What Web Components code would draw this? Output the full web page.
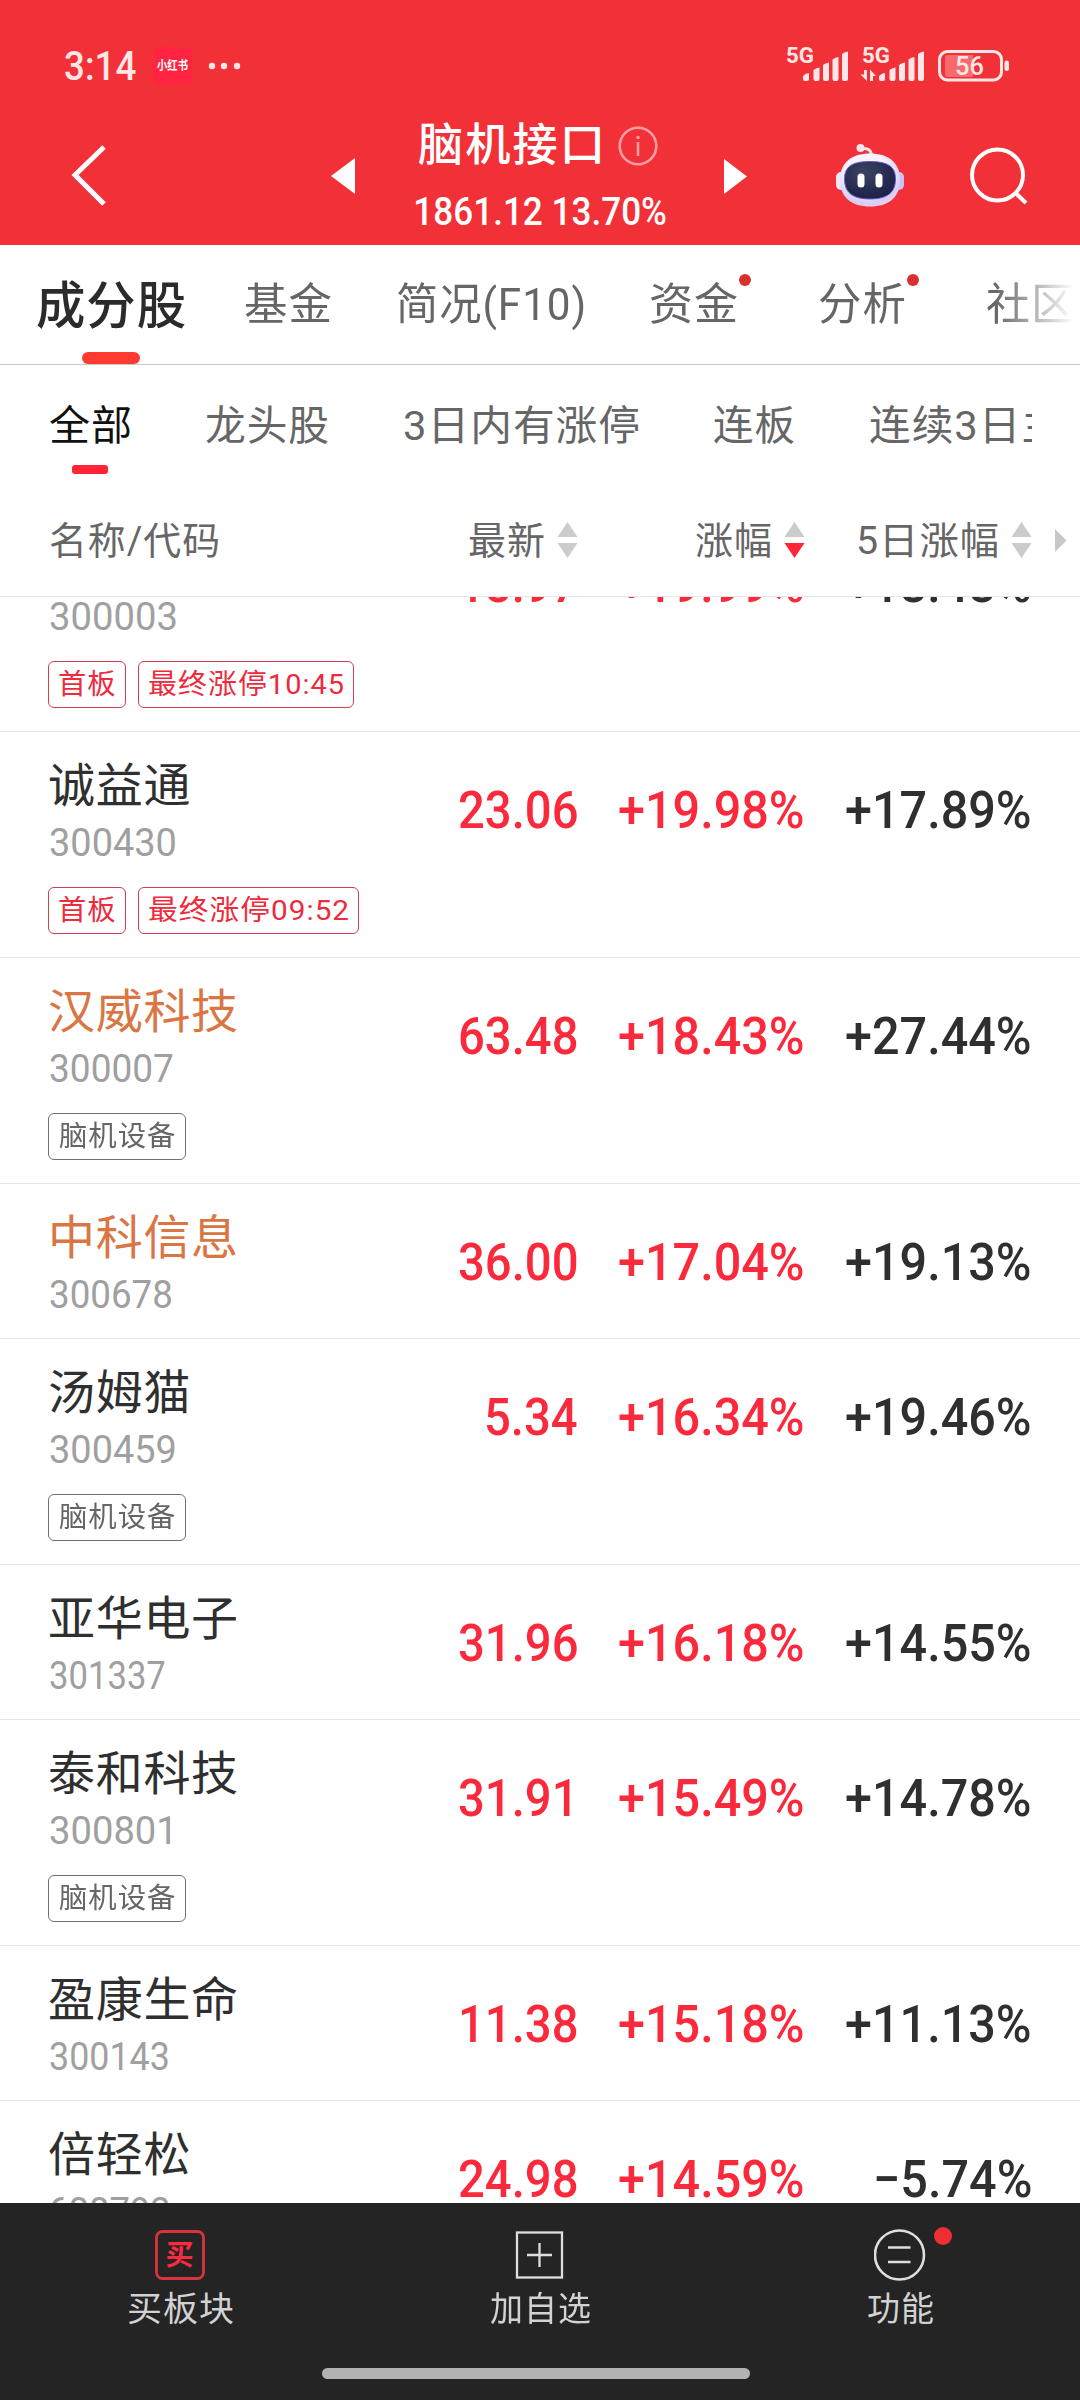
<!DOCTYPE html>
<html lang="zh-CN">
<head>
  <meta charset="utf-8">
  <title>脑机接口</title>
  <style>
    body {
      margin: 0;
      background: #fff;
      font-family: Roboto, "Noto Sans CJK SC", sans-serif;
    }
  </style>
</head>
<body>
  <app-board></app-board>

  <template id="app-board">
    <style>
      :host {
        display: flex;
        flex-direction: column;
        width: 1080px;
        height: 2400px;
        overflow: hidden;
      }
      header {
        flex: none;
        height: 245px;
        background: #f23037;
      }
      main {
        flex: 1;
        min-height: 0;
        overflow: hidden;
      }
      .list {
        margin-top: -91px;
      }
    </style>
    <header>
      <status-bar></status-bar>
      <board-nav></board-nav>
    </header>
    <tab-bar>
      <tab-item active w="148" style="margin-left: 37px">成分股</tab-item>
      <tab-item w="86" style="margin-left: 60px">基金</tab-item>
      <tab-item w="186" style="margin-left: 67px">简况(F10)</tab-item>
      <tab-item dot w="86" style="margin-left: 67px">资金</tab-item>
      <tab-item dot w="86" style="margin-left: 82px">分析</tab-item>
      <tab-item w="86" style="margin-left: 82px">社区</tab-item>
    </tab-bar>
    <filter-bar>
      <filter-item active w="80" style="margin-left: 50px">全部</filter-item>
      <filter-item w="122" style="margin-left: 76px">龙头股</filter-item>
      <filter-item w="234" style="margin-left: 76px">3日内有涨停</filter-item>
      <filter-item w="80" style="margin-left: 76px">连板</filter-item>
      <filter-item w="191" style="margin-left: 76px">连续3日主</filter-item>
    </filter-bar>
    <list-head></list-head>
    <main><div class="list"></div></main>
    <bottom-bar></bottom-bar>
  </template>

  <template id="fit-text">
    <style>
      :host {
        display: block;
        flex: none;
        height: 1em;
        line-height: 1em;
        white-space: nowrap;
      }
      span {
        display: inline-block;
        transform-origin: 0 50%;
      }
    </style>
    <span><slot></slot></span>
  </template>

  <template id="status-bar">
    <style>
      :host {
        display: flex;
        align-items: center;
        box-sizing: border-box;
        height: 110px;
        padding: 22px 71px 0 65px;
        color: #ffe6e6;
      }
      svg { overflow: visible; }
      fit-text { font-size: 41px; font-weight: 500; }
      .app { margin-left: 17px; }
      .dots { margin-left: 16px; }
      .right { margin-left: auto; }
    </style>
    <fit-text w="71">3:14</fit-text>
    <svg class="app" width="39" height="38" viewBox="0 0 39 38">
      <rect width="39" height="38" rx="8" fill="#ff2442"/>
      <text x="4" y="23" font-size="12" font-weight="700" fill="#fff" textLength="31" lengthAdjust="spacingAndGlyphs">小红书</text>
    </svg>
    <svg class="dots" width="34" height="8" viewBox="0 0 34 8" fill="#ffe6e6">
      <circle cx="4" cy="4" r="3.200"/><circle cx="16" cy="4" r="3.200"/><circle cx="29" cy="4" r="3.200"/>
    </svg>
    <svg class="right" width="222" height="40" viewBox="787 45 222 40" fill="#ffe6e6">
      <g font-size="21.500" font-weight="700">
        <text x="786" y="62" textLength="28" lengthAdjust="spacingAndGlyphs">5G</text>
        <text x="862" y="62" textLength="28" lengthAdjust="spacingAndGlyphs">5G</text>
      </g>
      <g id="bars">
        <path d="M803 78v-3q3-3 6-3v6q0 2-2 2h-2q-2 0-2-2z"/>
        <path d="M813.500 78v-9q3-2.500 6-2.500v11.500q0 2-2 2h-2q-2 0-2-2z"/>
        <path d="M823 78v-14q3-2.500 6-2.500v16.500q0 2-2 2h-2q-2 0-2-2z"/>
        <path d="M832.500 78v-19.500q3-2.500 6-2.500v22q0 2-2 2h-2q-2 0-2-2z"/>
        <path d="M842 78v-25q3-2.500 6-2.500v27.500q0 2-2 2h-2q-2 0-2-2z"/>
      </g>
      <use href="#bars" x="76"/>
      <path d="M867 69v11l-6.500-6.500h3.500v-4.500zM870 80v-11.500l6 6.500h-3v5z"/>
      <rect x="939.500" y="50.500" width="62" height="28.500" rx="8" fill="none" stroke="#ffe6e6" stroke-width="3"/>
      <path d="M945 57q0-3 3-3h25v22h-25q-3 0-3-3z" fill="#f8696e"/>
      <rect x="1004.500" y="59.500" width="4.500" height="10.500" rx="2.200"/>
      <text x="955" y="74" font-size="26" font-weight="500" textLength="29" lengthAdjust="spacingAndGlyphs">56</text>
    </svg>
  </template>

  <template id="board-nav">
    <style>
      :host {
        display: flex;
        align-items: center;
        height: 135px;
        color: #fff;
      }
      svg { flex: none; display: block; margin-top: -3px; }
      .title {
        display: flex;
        flex-direction: column;
        gap: 24px;
        width: 251px;
        margin-left: 60px;
      }
      .name {
        display: flex;
        align-items: center;
        gap: 18px;
        padding-left: 4px;
      }
      .name svg { margin-top: 0; }
      .name fit-text { font-size: 45px; letter-spacing: 2px; font-weight: 500; }
      .quote { margin-left: 1px; font-size: 39.500px; font-weight: 500; }
    </style>
    <svg style="margin-left: 71px" width="36" height="64" viewBox="0 0 36 64" fill="none" stroke="#fff" stroke-width="5">
      <path d="M33 3L4 31L33 60"/>
    </svg>
    <svg style="margin-left: 224px" width="24" height="36" viewBox="0 0 24 36" fill="#fff"><path d="M0 18L24 0v36z"/></svg>
    <div class="title">
      <div class="name">
        <fit-text w="181">脑机接口</fit-text>
        <svg width="40" height="40" viewBox="0 0 40 40" fill="none" stroke="#ff9fa3" stroke-width="2.600">
          <circle cx="20" cy="20" r="18.300"/>
          <path d="M20 16v14"/><circle cx="20" cy="11.500" r="1" fill="#ff9fa3" stroke-width="1.500"/>
        </svg>
      </div>
      <fit-text class="quote" w="250">1861.12 13.70%</fit-text>
    </div>
    <svg style="margin-left: 58px" width="23" height="35" viewBox="0 0 23 35" fill="#fff"><path d="M23 17.500L0 0v35z"/></svg>
    <svg style="margin-left: 88px" width="70" height="66" viewBox="835 142 70 66">
      <defs>
        <radialGradient id="shell" cx=".45" cy=".35" r=".7">
          <stop offset=".5" stop-color="#f7f3ff"/><stop offset=".85" stop-color="#d5cdf6"/><stop offset="1" stop-color="#f3d5e6"/>
        </radialGradient>
        <radialGradient id="face" cx=".4" cy=".3" r=".8">
          <stop offset="0" stop-color="#3c4463"/><stop offset="1" stop-color="#171c44"/>
        </radialGradient>
      </defs>
      <path d="M862 147.500q9-1 9.500 7" fill="none" stroke="#fbe4ee" stroke-width="3"/>
      <circle cx="860.500" cy="147" r="4" fill="#fbe4ee"/>
      <rect x="836" y="171" width="10" height="18" rx="5" fill="#f1e6fb"/>
      <rect x="894" y="171" width="10" height="18" rx="5" fill="#c9c3f5"/>
      <path d="M840 179C840 161 852 152.500 870 152.500S900 161 900 179S888 205.500 870 205.500S840 197 840 179z" fill="url(#shell)"/>
      <path d="M844.500 178C844.500 165 853 160.500 870 160.500S895.500 165 895.500 178S888 198 870 198S844.500 191 844.500 178z" fill="url(#face)" stroke="#6a5cc8" stroke-width="1"/>
      <rect x="857.500" y="172.500" width="7" height="14" rx="3.500" fill="#fff"/>
      <rect x="875.500" y="172.500" width="7" height="14" rx="3.500" fill="#fff"/>
    </svg>
    <svg style="margin-left: 65px" width="58" height="60" viewBox="970 148 58 60" fill="none" stroke="#fff" stroke-width="4">
      <circle cx="997.500" cy="177" r="25.500"/>
      <path d="M1015 194.500L1026 205"/>
    </svg>
  </template>

  <template id="tab-bar">
    <style>
      :host {
        display: block;
        flex: none;
        height: 119px;
        border-bottom: 1px solid #c8c8c8;
      }
      div {
        display: flex;
        align-items: center;
        height: 100%;
        -webkit-mask-image: linear-gradient(to right, #000 995px, transparent 1074px);
        mask-image: linear-gradient(to right, #000 995px, transparent 1074px);
      }
    </style>
    <div><slot></slot></div>
  </template>

  <template id="tab-item">
    <style>
      :host {
        display: flex;
        flex: none;
        align-items: center;
        position: relative;
        box-sizing: border-box;
        height: 100%;
        padding-top: 1px;
        color: #666;
        font-size: 44px;
        letter-spacing: 1px;
      }
      :host([active]) {
        padding-top: 3px;
        color: #2b2b2b;
        font-size: 51px;
        font-weight: 500;
      }
      :host([active])::after {
        content: "";
        position: absolute;
        left: 45px;
        bottom: 0;
        width: 58px;
        height: 12px;
        border-radius: 6px;
        background: #ff3a30;
      }
      :host([dot])::after {
        content: "";
        position: absolute;
        right: -14px;
        top: 29px;
        width: 12px;
        height: 12px;
        border-radius: 50%;
        background: #d93030;
      }
    </style>
  </template>

  <template id="filter-bar">
    <style>
      :host {
        display: flex;
        flex: none;
        align-items: center;
        width: 1032px;
        height: 119px;
        overflow: hidden;
      }
    </style>
    <slot></slot>
  </template>

  <template id="filter-item">
    <style>
      :host {
        display: flex;
        flex: none;
        align-items: center;
        position: relative;
        box-sizing: border-box;
        height: 100%;
        padding-top: 3px;
        color: #666;
        font-size: 41px;
        letter-spacing: 1px;
      }
      :host([active]) { color: #111; }
      :host([active])::after {
        content: "";
        position: absolute;
        left: 22px;
        top: 100px;
        width: 36px;
        height: 9px;
        border-radius: 3px;
        background: #ff2436;
      }
    </style>
  </template>

  <template id="list-head">
    <style>
      :host {
        display: flex;
        flex: none;
        align-items: center;
        box-sizing: border-box;
        height: 113px;
        border-bottom: 1px solid #e6e6e6;
        color: #666;
        font-size: 38px;
        letter-spacing: 1px;
      }
      fit-text { padding-top: 2px; }
      sort-mark { margin-left: 13px; }
    </style>
    <fit-text w="168" style="margin-left: 50px">名称/代码</fit-text>
    <fit-text w="75" style="margin-left: 251px">最新</fit-text><sort-mark></sort-mark>
    <fit-text w="75" style="margin-left: 118px">涨幅</fit-text><sort-mark order="desc"></sort-mark>
    <fit-text w="140" style="margin-left: 53px">5日涨幅</fit-text><sort-mark></sort-mark>
    <svg style="margin-left: 23px" width="12" height="23" viewBox="0 0 12 23" fill="#c8c8c8"><path d="M0 0l11.500 11.500L0 23z"/></svg>
  </template>

  <template id="sort-mark">
    <style>
      :host { display: block; flex: none; width: 21px; height: 36px; }
      svg { display: block; }
      path { fill: #ccc; }
      :host([order="desc"]) .down { fill: #ff2436; }
    </style>
    <svg width="21" height="36" viewBox="0 0 21 36">
      <path d="M10.500 0L20.500 15H.5z"/>
      <path class="down" d="M10.500 36L.5 21h20z"/>
    </svg>
  </template>

  <template id="stock-row">
    <style>
      :host {
        display: grid;
        grid-template-columns: 350px 178px 227px 227px;
        box-sizing: border-box;
        height: 155px;
        padding-left: 50px;
        border-bottom: 1px solid #e6e6e6;
      }
      :host([tagged]) { height: 226px; }
      .name {
        margin-left: -2px;
        padding-top: 30px;
        font-size: 47px;
        letter-spacing: .7px;
        color: #2f2f2f;
      }
      .name.hot { color: #d97644; }
      .code {
        padding-top: 15px;
        font-size: 39px;
        color: #a0a0a0;
      }
      .tags {
        display: flex;
        gap: 12px;
        margin: 24px 0 0 -2px;
      }
      .num {
        display: flex;
        justify-content: flex-end;
        padding-top: 53px;
        font-size: 52px;
        font-weight: 500;
        color: #fa2a3c;
      }
      .num.five { color: #2f2f2f; }
    </style>
    <div class="info"></div>
    <div class="num price"></div>
    <div class="num rise"></div>
    <div class="num five"></div>
  </template>

  <template id="stock-tag">
    <style>
      :host {
        display: flex;
        flex: none;
        align-items: center;
        box-sizing: border-box;
        height: 47px;
        padding: 1px 10px 0;
        border: 1px solid #707070;
        border-radius: 6px;
        color: #666;
        font-size: 28.500px;
        letter-spacing: 1px;
      }
      :host([red]) { border-color: #cf3f52; color: #ee2a3d; }
    </style>
  </template>

  <template id="bottom-bar">
    <style>
      :host {
        display: flex;
        flex: none;
        flex-direction: column;
        align-items: center;
        height: 197px;
        background: #242424;
      }
      nav {
        display: grid;
        grid-template-columns: repeat(3, 360px);
        height: 165px;
      }
      .home {
        width: 428px;
        height: 11px;
        margin-right: 8px;
        border-radius: 6px;
        background: #b2b2b2;
      }
    </style>
    <nav>
      <bar-item w="105">
        <svg slot="icon" width="50" height="50" viewBox="0 0 50 50">
          <rect x="1.500" y="1.500" width="47" height="47" rx="6" fill="none" stroke="#d9343c" stroke-width="2.800"/>
          <text x="10.500" y="35" font-size="28" font-weight="700" fill="#fa2a40">买</text>
        </svg>买板块</bar-item>
      <bar-item w="100">
        <svg slot="icon" width="50" height="50" viewBox="0 0 50 50" fill="none" stroke="#dedede" stroke-width="2.300">
          <rect x="2" y="2.500" width="45" height="45"/>
          <path d="M24.500 13v24M12 25h25"/>
        </svg>加自选</bar-item>
      <bar-item w="65" dot>
        <svg slot="icon" width="52" height="52" viewBox="0 0 52 52" fill="none" stroke="#dedede" stroke-width="2.600">
          <circle cx="25.500" cy="26" r="24.500"/>
          <path d="M14 18.500h22.500M14 33h22.500"/>
        </svg>功能</bar-item>
    </nav>
    <div class="home"></div>
  </template>

  <template id="bar-item">
    <style>
      :host {
        display: flex;
        flex-direction: column;
        align-items: center;
        color: #d2d2d2;
        font-size: 34px;
        letter-spacing: 1px;
      }
      .icon {
        display: grid;
        place-items: center;
        position: relative;
        height: 52px;
        margin: 26px 0 11px;
      }
      :host([dot]) .icon::after {
        content: "";
        position: absolute;
        right: -26px;
        top: -2px;
        width: 18px;
        height: 18px;
        border-radius: 50%;
        background: #ee2e32;
      }
    </style>
    <div class="icon"><slot name="icon"></slot></div>
  </template>

  <script>
    const stocks = [
      { name: '', code: '300003', cw: 126, price: '18.97', rise: '+19.99%', five: '+18.48%', tags: [['首板', 56, 1], ['最终涨停10:45', 194, 1]] },
      { name: '诚益通', code: '300430', cw: 125, price: '23.06', rise: '+19.98%', five: '+17.89%', tags: [['首板', 56, 1], ['最终涨停09:52', 199, 1]] },
      { name: '汉威科技', code: '300007', cw: 123, price: '63.48', rise: '+18.43%', five: '+27.44%', hot: 1, tags: [['脑机设备', 116]] },
      { name: '中科信息', code: '300678', cw: 121, price: '36.00', rise: '+17.04%', five: '+19.13%', hot: 1 },
      { name: '汤姆猫', code: '300459', cw: 125, price: '5.34', rise: '+16.34%', five: '+19.46%', tags: [['脑机设备', 116]] },
      { name: '亚华电子', code: '301337', cw: 115, price: '31.96', rise: '+16.18%', five: '+14.55%' },
      { name: '泰和科技', code: '300801', cw: 120, price: '31.91', rise: '+15.49%', five: '+14.78%', tags: [['脑机设备', 116]] },
      { name: '盈康生命', code: '300143', cw: 118, price: '11.38', rise: '+15.18%', five: '+11.13%' },
      { name: '倍轻松', code: '688793', cw: 119, price: '24.98', rise: '+14.59%', five: '−5.74%' }
    ];

    const ctx = document.createElement('canvas').getContext('2d');

    class BaseElement extends HTMLElement {
      constructor() {
        super();
        const template = document.getElementById(this.localName);
        this.attachShadow({mode: 'open'}).appendChild(template.content.cloneNode(true));
      }
    }

    /* one line of text, its box is as wide as the ink; w - wanted width, scale - plain horizontal scale */
    class FitText extends BaseElement {
      connectedCallback() {
        const span = this.shadowRoot.querySelector('span');
        const css = getComputedStyle(this);
        ctx.font = `${css.fontWeight} ${css.fontSize} ${css.fontFamily}`;
        ctx.letterSpacing = css.letterSpacing === 'normal' ? '0px' : css.letterSpacing;
        const m = ctx.measureText(this.textContent.trim());

        if (this.hasAttribute('scale')) {
          const scale = Number(this.getAttribute('scale'));
          this.style.width = `${m.width * scale}px`;
          span.style.transform = `scaleX(${scale})`;
          return;
        }

        const left = -m.actualBoundingBoxLeft;
        const ink = m.actualBoundingBoxRight - left;
        const width = Number(this.getAttribute('w')) || ink;
        const scale = width / ink;
        this.style.width = `${width}px`;
        span.style.transform = `translateX(${-left * scale}px) scaleX(${scale})`;
      }
    }

    /* takes its own text (not the text of slotted icons) and puts it into a fit-text */
    class LabelElement extends BaseElement {
      connectedCallback() {
        const label = document.createElement('fit-text');
        label.textContent = [...this.childNodes]
          .filter(node => node.nodeType === Node.TEXT_NODE)
          .map(node => node.data.trim())
          .join('');
        if (this.hasAttribute('w')) label.setAttribute('w', this.getAttribute('w'));
        this.shadowRoot.appendChild(label);
      }
    }

    class StockRow extends BaseElement {
      connectedCallback() {
        const item = this.item;
        const root = this.shadowRoot;
        const scales = { price: .908, rise: .934, five: .934 };
        const tags = (item.tags || []).map(([text, w, red]) =>
          `<stock-tag w="${w}" ${red ? 'red' : ''}>${text}</stock-tag>`).join('');

        this.toggleAttribute('tagged', tags !== '');
        root.querySelector('.info').innerHTML = `
          <fit-text class="name ${item.hot ? 'hot' : ''}" scale="1">${item.name}</fit-text>
          <fit-text class="code" w="${item.cw}">${item.code}</fit-text>
          ${tags && `<div class="tags">${tags}</div>`}`;
        Object.keys(scales).forEach(key => {
          root.querySelector(`.${key}`).innerHTML = `<fit-text scale="${scales[key]}">${item[key]}</fit-text>`;
        });
      }
    }

    class AppBoard extends BaseElement {
      connectedCallback() {
        const list = this.shadowRoot.querySelector('.list');
        stocks.forEach(item => {
          const row = document.createElement('stock-row');
          row.item = item;
          list.appendChild(row);
        });
      }
    }

    customElements.define('fit-text', FitText);
    ['status-bar', 'board-nav', 'tab-bar', 'filter-bar', 'list-head', 'sort-mark', 'bottom-bar']
      .forEach(name => customElements.define(name, class extends BaseElement {}));
    ['tab-item', 'filter-item', 'stock-tag', 'bar-item']
      .forEach(name => customElements.define(name, class extends LabelElement {}));
    customElements.define('stock-row', StockRow);
    customElements.define('app-board', AppBoard);
  </script>
</body>
</html>
